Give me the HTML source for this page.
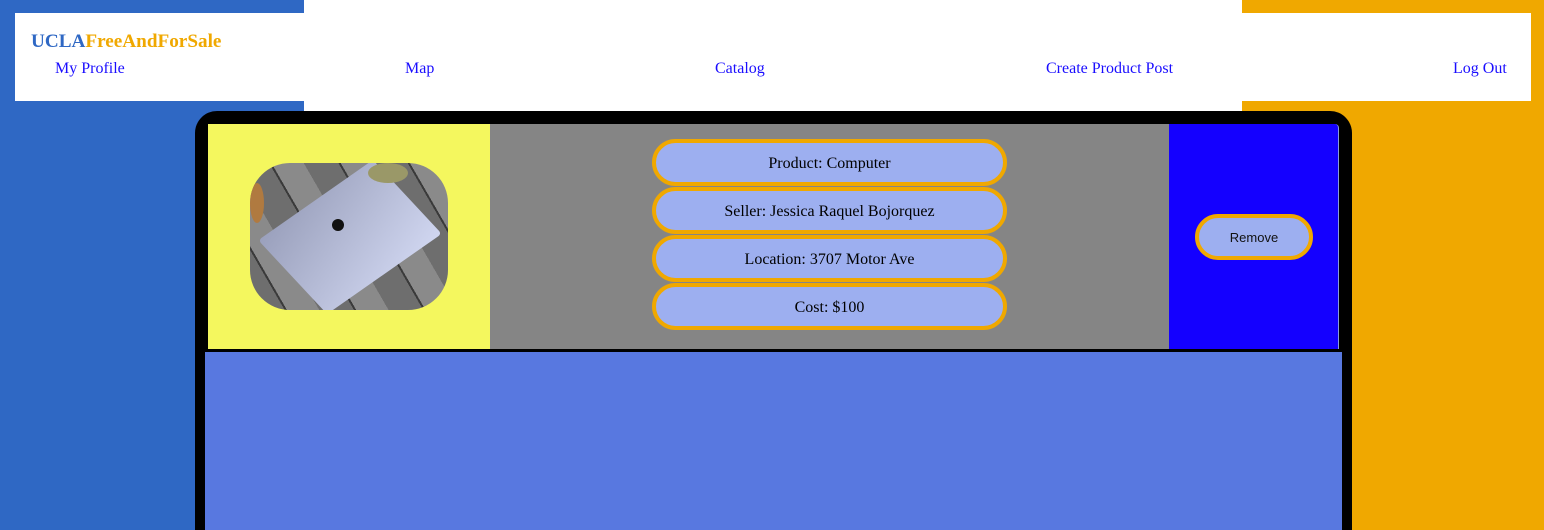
<!DOCTYPE html>
<html><head><style>
html,body{margin:0;width:1544px;height:530px;overflow:hidden}
body{position:relative;background:#2f68c4;font-family:"Liberation Serif",serif}
.abs{position:absolute}
.pill{position:absolute;left:652px;width:347px;height:39px;border:4px solid #f0a800;border-radius:24px;background:#9daff0;font-size:16px;text-align:center;line-height:42px;color:#000}
a{color:#1a0dff;font-size:16px;position:absolute;top:60px;text-decoration:none}
</style></head><body>
<div class="abs" style="left:1242px;top:0;width:302px;height:530px;background:#f0a800"></div>
<div class="abs" style="left:304px;top:0;width:938px;height:111px;background:#fff"></div>
<div class="abs" style="left:15px;top:13px;width:1516px;height:88px;background:#fff"></div>
<div class="abs" style="left:31px;top:31px;font-weight:bold;font-size:19.2px"><span style="color:#2f68c4">UCLA</span><span style="color:#f0a800">FreeAndForSale</span></div>
<a style="left:55px">My Profile</a>
<a style="left:405px">Map</a>
<a style="left:715px">Catalog</a>
<a style="left:1046px">Create Product Post</a>
<a style="left:1453px">Log Out</a>
<div class="abs" style="left:195px;top:111px;width:1157px;height:419px;background:#000;border-radius:22px 22px 0 0"></div>
<div class="abs" style="left:208px;top:124px;width:282px;height:225px;background:#f4f75e"></div>
<div class="abs" style="left:490px;top:124px;width:679px;height:225px;background:#858585"></div>
<div class="abs" style="left:1169px;top:124px;width:169px;height:225px;background:#1400ff;border-right:1px solid #8a9ae0;border-top-right-radius:4px"></div>
<div class="abs" style="left:205px;top:352px;width:1137px;height:178px;background:#5878e0"></div>
<div class="abs" style="left:250px;top:163px;width:198px;height:147px;border-radius:40px;overflow:hidden;background:repeating-linear-gradient(60deg,#6e6e6e 0 30px,#3a3a3a 30px 32px,#8a8a8a 32px 60px)">
 <div class="abs" style="width:140px;height:100px;background:linear-gradient(160deg,#9aa0bc,#d0d6f0);transform:rotate(-35deg) skewX(8deg);border-radius:4px;left:30px;top:24px"></div>
 <div class="abs" style="left:82px;top:56px;width:12px;height:12px;background:#111;border-radius:50%"></div>
 <div class="abs" style="left:0;top:20px;width:14px;height:40px;background:#b07a40;border-radius:50%"></div>
 <div class="abs" style="left:118px;top:0;width:40px;height:20px;background:#9a9868;border-radius:50%"></div>
</div>
<div class="pill" style="top:139px">Product: Computer</div>
<div class="pill" style="top:187px">Seller: Jessica Raquel Bojorquez</div>
<div class="pill" style="top:235px">Location: 3707 Motor Ave</div>
<div class="pill" style="top:283px">Cost: $100</div>
<div class="abs" style="left:1195px;top:214px;width:110px;height:38px;border:4px solid #f0a800;border-radius:24px;background:#9daff0;font-family:'Liberation Sans',sans-serif;font-size:13px;text-align:center;line-height:40px;color:#111">Remove</div>
</body></html>
